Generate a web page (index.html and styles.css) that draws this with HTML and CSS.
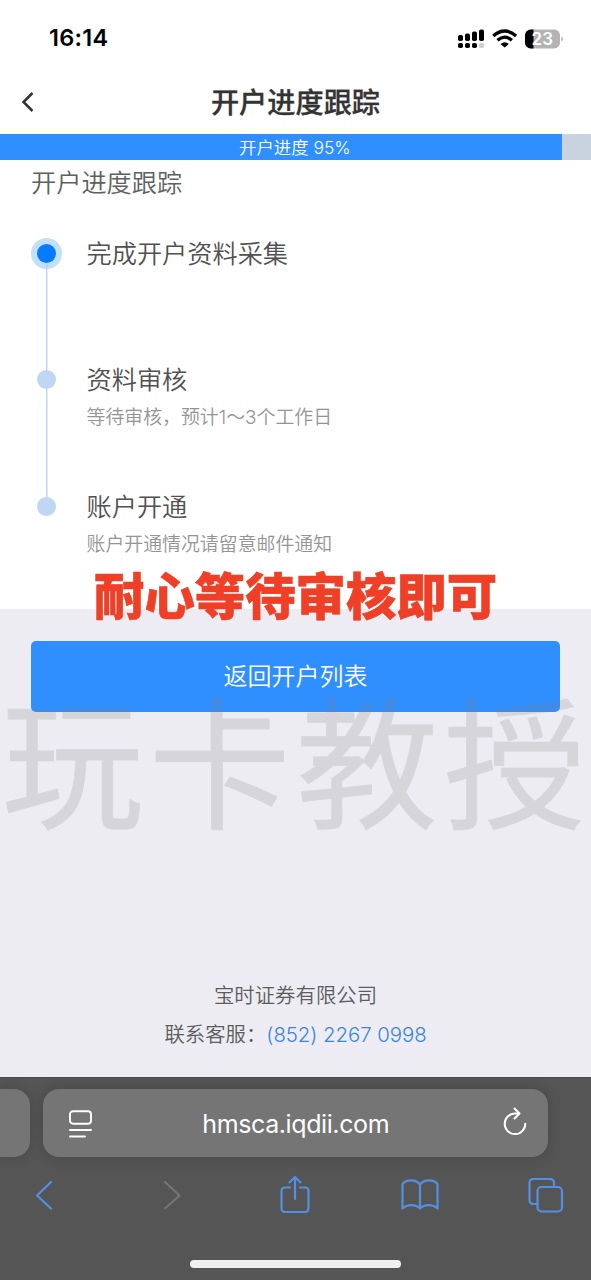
FILE: index.html
```html
<!DOCTYPE html>
<html lang="zh-CN">
<head>
<meta charset="utf-8">
<title>开户进度跟踪</title>
<link rel="stylesheet" href="styles.css">
</head>
<body>
<div class="screen">
  <header class="status">
    <span class="clock">16:14</span>
    <svg class="status-icons" width="108" height="24" viewBox="0 0 108 24">
      <g fill="#000">
        <rect x="2" y="9" width="5" height="6" rx="1.8"/><rect x="9" y="7.500" width="5" height="7.500" rx="1.8"/><rect x="16" y="5.500" width="5" height="9.500" rx="1.8"/><rect x="23" y="3.500" width="5" height="11.500" rx="1.8"/>
        <rect x="2" y="17" width="5" height="5" rx="1.8"/><rect x="9" y="17" width="5" height="5" rx="1.8"/><rect x="16" y="17" width="5" height="5" rx="1.8"/>
      </g>
      <rect x="23" y="17" width="5" height="5" rx="1.8" fill="#d0d0d0"/>
      <g fill="none" stroke="#000" stroke-width="3.3"><path d="M37.300 10Q48.700 0 60.100 10"/><path d="M41.500 14.300Q48.700 8 55.900 14.300"/></g>
      <path d="M44.500 18Q48.700 14.600 52.900 18L48.700 21.500Z"/>
      <rect x="69" y="3.500" width="35" height="19" rx="5.8" fill="#b3b3b3"/>
      <path d="M77.500 3.500h-2.700a5.800 5.800 0 0 0-5.800 5.800v7.400a5.800 5.800 0 0 0 5.800 5.800h2.700z"/>
      <path d="M105.300 10.500v5q1.700-.8 1.700-2.500t-1.700-2.500z" fill="#b3b3b3"/>
      <text class="battery" x="86.300" y="18.900" text-anchor="middle">23</text>
    </svg>
  </header>

  <nav class="navbar">
    <svg class="nav-back" width="14" height="22" viewBox="0 0 14 22"><path d="M11.500 2L2.500 11l9 9" fill="none" stroke="#333" stroke-width="2.500"/></svg>
    <h1 class="nav-title">开户进度跟踪</h1>
  </nav>

  <div class="progress"><div class="progress-fill">开户进度 95%</div></div>

  <main class="panel">
    <h2 class="panel-title">开户进度跟踪</h2>
    <ol class="steps">
      <li class="step"><span class="dot active"></span><div class="step-text"><p class="step-name">完成开户资料采集</p></div></li>
      <li class="step"><span class="dot"></span><div class="step-text"><p class="step-name">资料审核</p><p class="step-note">等待审核，预计1～3个工作日</p></div></li>
      <li class="step"><span class="dot"></span><div class="step-text"><p class="step-name">账户开通</p><p class="step-note">账户开通情况请留意邮件通知</p></div></li>
    </ol>
  </main>

  <section class="lower">
    <button class="return-btn">返回开户列表</button>
    <footer class="contact">
      <p>宝时证券有限公司</p>
      <p>联系客服：<span class="phone">(852) 2267 0998</span></p>
    </footer>
  </section>

  <div class="browser">
    <div class="tabs">
      <div class="tab-prev"></div>
      <div class="address">
        <svg width="24" height="28" viewBox="0 0 24 28" fill="none" stroke="#fff" stroke-width="1.9" stroke-linecap="round"><rect x="2" y="1.200" width="21" height="12.500" rx="3"/><path d="M2 20h21M2 26.500h15"/></svg>
        <span class="host">hmsca.iqdii.com</span>
        <svg class="reload" width="26" height="30" viewBox="0 0 26 30" fill="none" stroke="#fff" stroke-width="2" stroke-linecap="round" stroke-linejoin="round"><path d="M17 6.500H13a10.300 10.300 0 1 0 10.300 10.300M12.500 1.500l5 5-5 5"/></svg>
      </div>
    </div>
    <div class="tools">
      <svg width="20" height="40" viewBox="0 0 20 40"><path d="M17 7L3 20.500 17 33.500"/></svg>
      <svg class="disabled" width="20" height="40" viewBox="0 0 20 40"><path d="M2 7l14.500 13.500L2 33.500"/></svg>
      <svg width="32" height="40" viewBox="0 0 32 40"><path d="M11 12.500H6Q2.500 12.500 2.500 16v17Q2.500 37 6 37h20q3.500 0 3.500-4V16q0-3.500-3.500-3.500h-5M16 24V2M10.500 7.500L16 2l5.500 5.500"/></svg>
      <svg width="40" height="40" viewBox="0 0 40 40"><path d="M20 9.500C16 4 6.500 4 2.500 9v24.500C7 29 16 29 20 33.500 24 29 33 29 37.500 33.500V9C33.500 4 24 4 20 9.500v24"/></svg>
      <svg width="36" height="40" viewBox="0 0 36 40"><path d="M9.500 29H5.500Q1.500 29 1.500 25V8q0-4 4-4h16.500q4 0 4 4v4"/><rect x="9.500" y="12" width="24.500" height="24.500" rx="4"/></svg>
    </div>
    <div class="home-bar"></div>
  </div>

  <div class="caption">耐心等待审核即可</div>
  <div class="watermark">玩卡教授</div>
</div>
</body>
</html>
```
FILE: styles.css
```css
* { box-sizing: border-box; margin: 0; padding: 0; }
body { background: #fff; font-family: Inter, "Noto Sans CJK SC", sans-serif; }
.screen { position: relative; width: 591px; height: 1280px; overflow: hidden; display: flex; flex-direction: column; }

.status { height: 75px; padding: 0 27px 0 49px; display: flex; align-items: center; justify-content: space-between; }
.clock { font-size: 23.5px; font-weight: 600; letter-spacing: .3px; color: #000; }
.status-icons { display: block; }
.battery { font: 600 17px Inter, sans-serif; fill: #fff; }

.navbar { height: 59px; display: grid; grid-template-columns: 60px 1fr 60px; align-items: center; padding-bottom: 5px; }
.nav-back { margin-left: 21px; }
.nav-title { padding-top: 2px; text-align: center; font-size: 28.2px; line-height: 40px; font-weight: 500; color: #333; -webkit-text-stroke: .3px #333; }

.progress { height: 26px; background: #c8d3df; }
.progress-fill { width: 562px; height: 26px; padding-left: 239px; background: #308fff; color: #fff; font-size: 17.4px; line-height: 28px; font-weight: 350; white-space: nowrap; }

.panel { height: 449px; padding: 5px 31px 0; background: #fff; }
.panel-title { font-size: 25.2px; line-height: 37px; font-weight: 350; color: #606060; }
.steps { list-style: none; padding-top: 35px; }
.step { height: 126.3px; display: grid; grid-template-columns: 55.5px 1fr; background: linear-gradient(#bed8f4, #bed8f4) 15px 0 / 1.5px 100% no-repeat; }
.step:first-child { background-position: 15px 17px; }
.step:last-child { background-size: 1.5px 17px; }
.dot { width: 19px; height: 19px; margin: 7px 0 0 6.4px; border-radius: 50%; background: #bfd7f4; }
.dot.active { background: #077bff; box-shadow: 0 0 0 6px rgba(176, 212, 247, .75); }
.step-name { font-size: 25.2px; line-height: 34px; font-weight: 350; color: #505050; }
.step-note { padding-top: 7px; font-size: 18.9px; line-height: 28px; font-weight: 350; color: #949494; }

.lower { height: 468px; padding: 32px 31px 0; background: #edecf2; display: flex; flex-direction: column; }
.return-btn { width: 529px; height: 71px; padding-bottom: 5px; border: 0; border-radius: 5px; background: #308fff; color: #fff; font: 350 24px "Noto Sans CJK SC", sans-serif; }
.contact { padding-top: 264px; text-align: center; color: #5c5c5c; font-size: 20.4px; line-height: 39px; font-weight: 350; }
.phone { color: #3b85db; letter-spacing: -.05px; }

.browser { height: 203px; background: #555; border-top: 1px solid #4b4b4b; display: flex; flex-direction: column; align-items: center; }
.tabs { width: 591px; padding-top: 11px; display: flex; gap: 12.5px; }
.tab-prev { width: 30px; height: 68px; border-radius: 0 16px 16px 0; background: #757575; box-shadow: 0 0 14px rgba(0, 0, 0, .15); }
.address { width: 505.5px; height: 68px; padding: 2px 20px 0 25px; border-radius: 16px; background: #757575; box-shadow: 0 0 14px rgba(0, 0, 0, .18); display: flex; align-items: center; justify-content: space-between; }
.host { margin-left: -2px; color: #fff; font-size: 25px; letter-spacing: -.4px; }
.reload { margin-bottom: 4px; }
.tools { width: 591px; height: 40px; margin-top: 18px; padding: 0 25px 0 34px; display: grid; grid-template-columns: 129px 116px 121px 128px 38px; fill: none; stroke: #5390e3; stroke-width: 2.2; stroke-linejoin: round; stroke-linecap: round; }
.disabled { stroke: #747474; }
.home-bar { width: 211px; height: 8px; margin-top: 45px; border-radius: 4px; background: #f0f0f0; }

/* Annotations laid over the page */
.caption { position: absolute; left: 94px; top: 557px; font: 900 50.4px/74px "Noto Sans CJK SC", sans-serif; color: #ef4027; -webkit-text-stroke: .6px #ef4027; white-space: nowrap; }
.watermark { position: absolute; left: 1.500px; top: 685px; font: 400 142px/142px "Noto Sans CJK SC", sans-serif; letter-spacing: 5.300px; color: #808080; -webkit-text-stroke: .8px #808080; opacity: .2; white-space: nowrap; }
```
